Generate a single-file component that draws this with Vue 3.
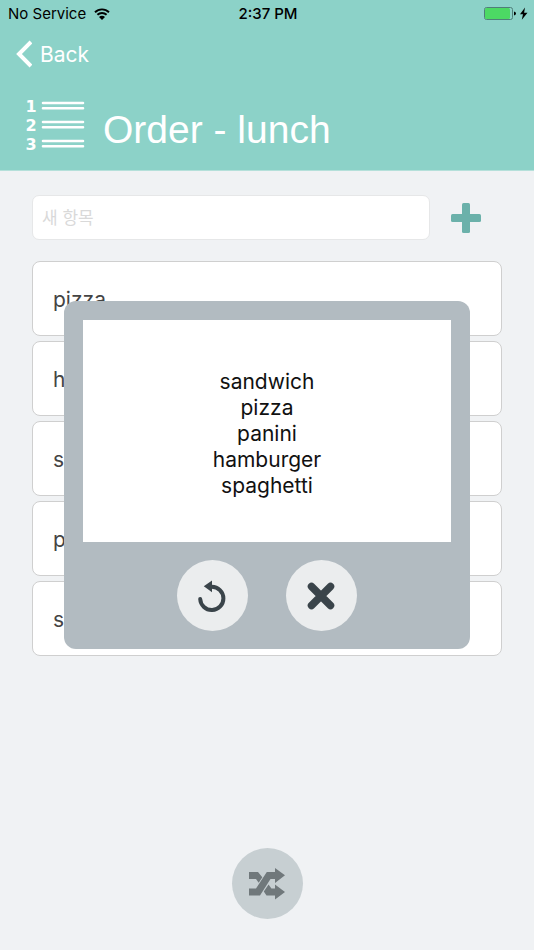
<template>
    <div class="page">
        <header class="header">
            <div class="status-bar">
                <div class="carrier">
                    <span>No Service</span>
                    <svg class="wifi" viewBox="0 0 16 12" width="16" height="12">
                        <path d="M1 4.2a10 10 0 0 1 14 0M3.4 6.8a6.6 6.6 0 0 1 9.2 0" fill="none" stroke="#000" stroke-width="1.9" />
                        <path d="M8 12 5 9a4.2 4.2 0 0 1 6 0z" />
                    </svg>
                </div>
                <span class="time">2:37 PM</span>
                <div class="battery">
                    <svg viewBox="0 0 44 14" width="44" height="14">
                        <rect x="0.5" y="0.5" width="28" height="12" rx="2" fill="none" stroke="#4f7f79" />
                        <rect x="1" y="1" width="25" height="11" rx="1.5" fill="#4cd964" />
                        <path d="M30 4.5q2 .3 2 2t-2 2z" />
                        <path d="M41 .6 36 7.2h3L37.8 12.8 43.5 5.7h-3.4z" />
                    </svg>
                </div>
            </div>
            <button class="back" type="button">
                <svg viewBox="0 0 16 28" width="16" height="28">
                    <path d="M15 2 3 14l12 12" fill="none" stroke="#fff" stroke-width="4" />
                </svg>
                <span>Back</span>
            </button>
            <div class="title-row">
                <svg class="list-icon" viewBox="0 0 60 56" width="60" height="56">
                    <g class="digits">
                        <text x="5" y="15">1</text>
                        <text x="5" y="34">2</text>
                        <text x="5" y="53">3</text>
                    </g>
                    <path
                        d="M17 6h40M17 11.3h40M17 25h40M17 30.3h40M17 44h40M17 49.3h40"
                        stroke="#fff"
                        stroke-width="2.6"
                        stroke-linecap="round"
                    />
                </svg>
                <h1 class="title">Order - lunch</h1>
            </div>
        </header>

        <main class="content">
            <form class="new-item" @submit.prevent="addItem">
                <input v-model="newItem" class="new-input" type="text" placeholder="새 항목" aria-label="새 항목" />
                <button class="add" type="submit" aria-label="Add">
                    <svg viewBox="0 0 30 30" width="30" height="30" fill="#6bb1aa">
                        <rect x="11" y="0" width="8" height="30" rx="1.5" />
                        <rect x="0" y="11" width="30" height="8" rx="1.5" />
                    </svg>
                </button>
            </form>
            <ul class="items">
                <li v-for="item in items" :key="item" class="item">{{ item }}</li>
            </ul>
        </main>

        <footer class="footer">
            <button class="round shuffle" type="button" aria-label="Shuffle" @click="shuffle">
                <svg viewBox="0 0 36 32" width="36" height="32" fill="#70787b">
                    <path d="M0 4h9l4.3 5.3-3.6 5.4L7 11H0z" />
                    <path d="M0 20.5h7L17.8 4H26V0l10 7.3L26 15v-4h-4.5L11 27.5H0z" />
                    <path d="M19.6 16.5l2.8 4H26v-4l10 7.4-10 7.6v-4h-8.5l-2.700-4z" />
                </svg>
            </button>
        </footer>

        <div v-if="showResult" class="overlay">
            <div class="modal" role="dialog" aria-label="Result">
                <ol class="result">
                    <li v-for="name in result" :key="name">{{ name }}</li>
                </ol>
                <div class="actions">
                    <button class="round" type="button" aria-label="Again" @click="shuffle">
                        <svg viewBox="0 0 28 32" width="28" height="32">
                            <path d="M2.2 19A11.6 11.6 0 1 0 13.8 6.8" fill="none" stroke="#3a444a" stroke-width="4" stroke-linecap="round" />
                            <path d="M5.8 6.2 14 .5v11.800z" fill="#3a444a" />
                        </svg>
                    </button>
                    <button class="round" type="button" aria-label="Close" @click="showResult = false">
                        <svg viewBox="0 0 28 28" width="28" height="28">
                            <path d="M4.5 4.5l19 19M23.5 4.5l-19 19" stroke="#3a444a" stroke-width="7.5" stroke-linecap="round" />
                        </svg>
                    </button>
                </div>
            </div>
        </div>
    </div>
</template>

<script setup>
import { ref } from 'vue';

const newItem = ref('');
const showResult = ref(true);
const items = ref(['pizza', 'hamburger', 'spaghetti', 'panini', 'sandwich']);
const result = ref(['sandwich', 'pizza', 'panini', 'hamburger', 'spaghetti']);

const addItem = () => {
    const value = newItem.value.trim();
    if (!value || items.value.includes(value)) return;
    items.value.push(value);
    newItem.value = '';
};

const shuffle = () => {
    const list = [...items.value];
    for (let i = list.length - 1; i > 0; i--) {
        const j = Math.floor(Math.random() * (i + 1));
        [list[i], list[j]] = [list[j], list[i]];
    }
    result.value = list;
    showResult.value = true;
};
</script>

<style>
body {
    background: #f0f2f4;
}
</style>

<style scoped>
.page {
    display: flex;
    flex-direction: column;
    min-height: 100vh;
    font-family: Inter, "Noto Sans CJK KR", sans-serif;
    background: #f0f2f4;
}

button {
    padding: 0;
    border: 0;
    background: none;
    font: inherit;
    cursor: pointer;
}

svg {
    display: block;
}

ul,
ol {
    margin: 0;
    padding: 0;
    list-style: none;
}

.header {
    box-sizing: border-box;
    height: 171px;
    background: #8cd2c8;
    border-bottom: 1px solid #b5e0da;
}

.status-bar {
    display: grid;
    grid-template-columns: 1fr auto 1fr;
    align-items: center;
    height: 27px;
    padding: 0 6px 0 8px;
    font-size: 15px;
}

.carrier {
    display: flex;
    align-items: center;
    gap: 8px;
}

.time {
    font-weight: 500;
}

.battery {
    justify-self: end;
}

.back {
    display: flex;
    align-items: center;
    gap: 8px;
    height: 54px;
    padding-left: 16px;
    font-size: 21px;
    color: #fff;
}

.title-row {
    display: flex;
    align-items: flex-start;
    gap: 17px;
    padding: 16px 26px 0;
}

.digits {
    fill: #fff;
    font-family: "DejaVu Sans", sans-serif;
    font-size: 16px;
    font-weight: 700;
    text-anchor: middle;
}

.title {
    margin: 0;
    padding-top: 11px;
    font-family: "Liberation Sans", sans-serif;
    font-size: 39px;
    font-weight: 400;
    line-height: 44px;
    color: #fff;
}

.content {
    flex: 1;
    padding: 24px 32px;
}

.new-item {
    display: flex;
    align-items: center;
    gap: 21px;
    padding-right: 21px;
}

.new-input {
    box-sizing: border-box;
    flex: 1;
    min-width: 0;
    height: 45px;
    padding: 0 9px;
    border: 1px solid #e6e7e8;
    border-radius: 7px;
    background: #fff;
    font: inherit;
    font-size: 17px;
}

.new-input::placeholder {
    color: #d9d9d9;
    opacity: 1;
}

.items {
    display: flex;
    flex-direction: column;
    gap: 5px;
    margin-top: 21px;
}

.item {
    box-sizing: border-box;
    height: 75px;
    padding-left: 20px;
    border: 1px solid #cfcfcf;
    border-radius: 8px;
    background: #fff;
    font-size: 21px;
    line-height: 76px;
    color: #444;
}

.footer {
    display: flex;
    justify-content: center;
    padding-bottom: 31px;
}

.round {
    display: flex;
    align-items: center;
    justify-content: center;
    width: 71px;
    height: 71px;
    border-radius: 50%;
    background: #ebedee;
}

.shuffle {
    background: #c7cfd2;
}

.overlay {
    position: fixed;
    inset: 0;
    display: flex;
    align-items: center;
    justify-content: center;
}

.modal {
    box-sizing: border-box;
    width: 76%;
    padding: 19px 19px 18px;
    border-radius: 12px;
    background: #b2bbc1;
}

.result {
    display: flex;
    flex-direction: column;
    justify-content: center;
    box-sizing: border-box;
    min-height: 222px;
    padding-top: 6px;
    background: #fff;
    font-size: 21px;
    line-height: 26px;
    text-align: center;
    color: #111;
}

.actions {
    display: flex;
    justify-content: center;
    gap: 38px;
    margin-top: 18px;
}
</style>
